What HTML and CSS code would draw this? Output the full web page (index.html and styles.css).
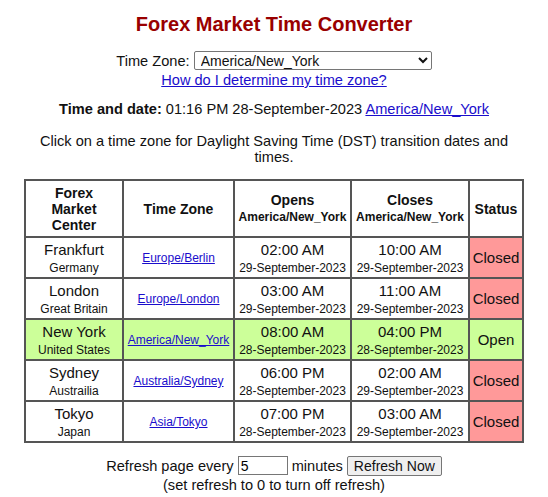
FILE: index.html
```html
<!DOCTYPE html>
<html>
<head>
<meta charset="utf-8">
<title>Forex Market Time Converter</title>
<link rel="stylesheet" href="styles.css">
</head>
<body>
<div class="page">
  <h1 class="title">Forex Market Time Converter</h1>
  <div class="tz-row">
    <label class="tz-label">Time Zone:
      <select class="tz-select"><option>America/New_York</option></select>
    </label>
    <br>
    <a href="#" class="link">How do I determine my time zone?</a>
  </div>
  <p class="now"><b>Time and date:</b> 01:16 PM 28-September-2023 <a href="#" class="link">America/New_York</a></p>
  <p class="hint">Click on a time zone for Daylight Saving Time (DST) transition dates and times.</p>
  <table class="markets">
    <colgroup>
      <col class="c1"><col class="c2"><col class="c3"><col class="c4"><col class="c5">
    </colgroup>
    <thead>
      <tr class="head">
        <th>Forex<br>Market<br>Center</th>
        <th>Time Zone</th>
        <th>Opens<br><span class="sub">America/New_York</span></th>
        <th>Closes<br><span class="sub">America/New_York</span></th>
        <th>Status</th>
      </tr>
    </thead>
    <tbody>
      <tr>
        <td>Frankfurt<br><span class="small">Germany</span></td>
        <td><a href="#" class="tzlink">Europe/Berlin</a></td>
        <td>02:00 AM<br><span class="small">29-September-2023</span></td>
        <td>10:00 AM<br><span class="small">29-September-2023</span></td>
        <td class="closed">Closed</td>
      </tr>
      <tr>
        <td>London<br><span class="small">Great Britain</span></td>
        <td><a href="#" class="tzlink">Europe/London</a></td>
        <td>03:00 AM<br><span class="small">29-September-2023</span></td>
        <td>11:00 AM<br><span class="small">29-September-2023</span></td>
        <td class="closed">Closed</td>
      </tr>
      <tr class="open-row">
        <td>New York<br><span class="small">United States</span></td>
        <td><a href="#" class="tzlink">America/New_York</a></td>
        <td>08:00 AM<br><span class="small">28-September-2023</span></td>
        <td>04:00 PM<br><span class="small">28-September-2023</span></td>
        <td>Open</td>
      </tr>
      <tr>
        <td>Sydney<br><span class="small">Austrailia</span></td>
        <td><a href="#" class="tzlink">Australia/Sydney</a></td>
        <td>06:00 PM<br><span class="small">28-September-2023</span></td>
        <td>02:00 AM<br><span class="small">29-September-2023</span></td>
        <td class="closed">Closed</td>
      </tr>
      <tr>
        <td>Tokyo<br><span class="small">Japan</span></td>
        <td><a href="#" class="tzlink">Asia/Tokyo</a></td>
        <td>07:00 PM<br><span class="small">28-September-2023</span></td>
        <td>03:00 AM<br><span class="small">29-September-2023</span></td>
        <td class="closed">Closed</td>
      </tr>
    </tbody>
  </table>
  <div class="refresh">
    Refresh page every <input class="mins" type="text" value="5"> minutes <button class="btn">Refresh Now</button>
    <br>(set refresh to 0 to turn off refresh)
  </div>
</div>
</body>
</html>
```

FILE: styles.css
```css
html, body {
  margin: 0;
  padding: 0;
  background: #ffffff;
}
body {
  font-family: "Liberation Sans", Arial, sans-serif;
  font-size: 14.6px;
  color: #111111;
}
.page {
  width: 548px;
  text-align: center;
}
.title {
  margin: 0;
  padding-top: 12px;
  font-size: 20px;
  font-weight: bold;
  color: #990000;
  line-height: 24px;
}
.tz-row {
  margin-top: 16px;
  line-height: 19px;
}
.tz-select {
  width: 238px;
  height: 19px;
  font-family: "Liberation Sans", Arial, sans-serif;
  font-size: 14px;
  padding: 0 2px;
  border: 1px solid #767676;
  border-radius: 2px;
  background: #ffffff;
  color: #111111;
  vertical-align: middle;
  margin-top: -3px;
}
.link {
  color: #1a0dcc;
  text-decoration: underline;
}
.now {
  margin: 10px 0 0 0;
  line-height: 18px;
}
.hint {
  margin: 15px auto 0 auto;
  width: 490px;
  line-height: 16px;
}
.markets {
  margin: 14px auto 0 auto;
  border-collapse: collapse;
  border: 2px solid #555555;
}
.c1 { width: 98px; }
.c2 { width: 111px; }
.c3 { width: 117px; }
.c4 { width: 118px; }
.c5 { width: 54px; }
.markets th, .markets td {
  border: 2px solid #555555;
  padding: 0 2px;
  text-align: center;
  vertical-align: middle;
}
.markets th {
  font-size: 14px;
  line-height: 16px;
  height: 55px;
  color: #111111;
}
.sub {
  font-size: 12px;
}
.markets td {
  font-size: 15px;
  line-height: 17px;
  height: 39px;
}
.small {
  font-size: 12px;
  line-height: 14px;
}
.tzlink {
  font-size: 12px;
  color: #1a0dcc;
  text-decoration: underline;
}
.closed {
  background: #ff9999;
}
.open-row td {
  background: #ccff99;
}
.refresh {
  margin-top: 14px;
  line-height: 19px;
}
.mins {
  width: 44px;
  height: 17px;
  padding: 0 2px;
  font-family: "Liberation Sans", Arial, sans-serif;
  font-size: 14px;
  border: 1px solid #767676;
  box-sizing: content-box;
  vertical-align: middle;
  margin-top: -3px;
}
.btn {
  font-family: "Liberation Sans", Arial, sans-serif;
  font-size: 14px;
  padding: 1px 6px;
  border: 1px solid #767676;
  border-radius: 2px;
  background: #efefef;
  color: #111111;
  vertical-align: middle;
  margin-top: -3px;
}
```
